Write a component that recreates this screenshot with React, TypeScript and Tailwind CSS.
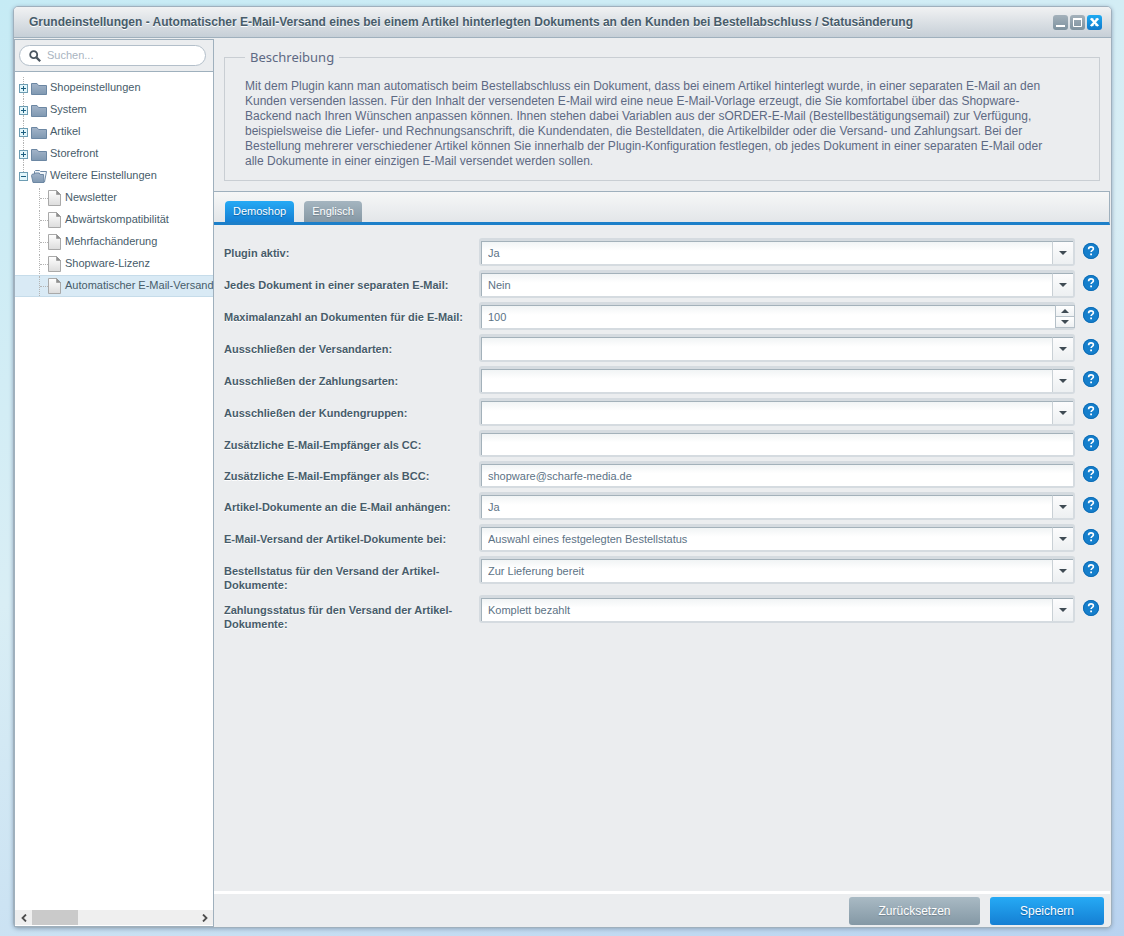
import { useState } from "react";
import type { ReactNode } from "react";

interface Field {
  id: string;
  label: string;
  value: string;
  type: "select" | "number" | "text";
}

const folders = ["Shopeinstellungen", "System", "Artikel", "Storefront"];

const pages = [
  "Newsletter",
  "Abwärtskompatibilität",
  "Mehrfachänderung",
  "Shopware-Lizenz",
  "Automatischer E-Mail-Versand",
];

const fields: Field[] = [
  { id: "active", label: "Plugin aktiv:", value: "Ja", type: "select" },
  { id: "separate", label: "Jedes Dokument in einer separaten E-Mail:", value: "Nein", type: "select" },
  { id: "max", label: "Maximalanzahl an Dokumenten für die E-Mail:", value: "100", type: "number" },
  { id: "dispatch", label: "Ausschließen der Versandarten:", value: "", type: "select" },
  { id: "payment", label: "Ausschließen der Zahlungsarten:", value: "", type: "select" },
  { id: "groups", label: "Ausschließen der Kundengruppen:", value: "", type: "select" },
  { id: "cc", label: "Zusätzliche E-Mail-Empfänger als CC:", value: "", type: "text" },
  { id: "bcc", label: "Zusätzliche E-Mail-Empfänger als BCC:", value: "shopware@scharfe-media.de", type: "text" },
  { id: "attach", label: "Artikel-Dokumente an die E-Mail anhängen:", value: "Ja", type: "select" },
  { id: "trigger", label: "E-Mail-Versand der Artikel-Dokumente bei:", value: "Auswahl eines festgelegten Bestellstatus", type: "select" },
  { id: "orderState", label: "Bestellstatus für den Versand der Artikel-Dokumente:", value: "Zur Lieferung bereit", type: "select" },
  { id: "paymentState", label: "Zahlungsstatus für den Versand der Artikel-Dokumente:", value: "Komplett bezahlt", type: "select" },
];

function ToggleIcon({ open }: { open: boolean }) {
  return (
    <span className="flex h-full w-[9px] shrink-0 flex-col items-center">
      <span className="w-px flex-1 border-l border-dotted border-[#b4b4b4]" />
      <svg width="9" height="9" viewBox="0 0 9 9" shapeRendering="crispEdges">
        <rect x="0.5" y="0.5" width="8" height="8" fill="#e3f6fb" stroke="#6d9db3" />
        <path d="M2 4.5h5" stroke="#1d5f80" />
        {!open && <path d="M4.5 2v5" stroke="#1d5f80" />}
      </svg>
      <span className={open ? "flex-1" : "w-px flex-1 border-l border-dotted border-[#b4b4b4]"} />
    </span>
  );
}

function FolderIcon({ open }: { open: boolean }) {
  return (
    <svg width="16" height="13" viewBox="0 0 16 13" className="shrink-0">
      <defs>
        <linearGradient id="folder" x1="0" y1="0" x2="0" y2="1">
          <stop offset="0" stopColor="#a3b4c9" />
          <stop offset="1" stopColor="#7f98b1" />
        </linearGradient>
      </defs>
      {open ? (
        <>
          <path d="M3.5 10V1.5l1-1h4l1 1h6l-2 10.500" fill="#f2f6fa" stroke="#6c87a3" />
          <path d="M.5 5.500l1-1.500h2l.8-1h4l.8 1.500h3.400l.5 8H2z" fill="url(#folder)" stroke="#6c87a3" />
        </>
      ) : (
        <path d="M.5 12.500V1.500h5.500l1.500 2h8v9z" fill="url(#folder)" stroke="#6c87a3" />
      )}
    </svg>
  );
}

function PageIcon() {
  return (
    <svg width="13" height="16" viewBox="0 0 13 16" className="shrink-0">
      <defs>
        <linearGradient id="page" x1="0" y1="0" x2="0" y2="1">
          <stop offset="0" stopColor="#fff" />
          <stop offset="1" stopColor="#dcdcdc" />
        </linearGradient>
      </defs>
      <path d="M.5.5H8.500l4 4v11H.5z" fill="url(#page)" stroke="#a9a9a9" />
      <path d="M8.500.5v4h4z" fill="#8f8f8f" stroke="#8f8f8f" strokeWidth=".6" />
    </svg>
  );
}

function Arrow({ up }: { up?: boolean }) {
  return (
    <svg width="8" height="4" viewBox="0 0 8 4">
      <path d={up ? "M0 4L4 0l4 4z" : "M0 0h8L4 4z"} fill="#3f4b54" />
    </svg>
  );
}

function HelpButton({ label }: { label: string }) {
  return (
    <button
      type="button"
      aria-label={`Hilfe: ${label}`}
      className="mt-[5px] flex size-4 shrink-0 items-center justify-center rounded-full bg-[#157fcc]"
    >
      <svg width="16" height="16" viewBox="0 0 16 16" fill="none">
        <circle cx="8" cy="8" r="7.500" stroke="#0f6cb4" />
        <path d="M5.600 6.200c0-1.600 1.100-2.300 2.400-2.300s2.400.8 2.400 2c0 1.500-2.300 1.500-2.300 3.200" stroke="#fff" strokeWidth="1.600" />
        <path d="M7.200 10.500h1.800v1.700H7.200z" fill="#fff" />
      </svg>
    </button>
  );
}

function WindowButton({ label, active, children }: { label: string; active?: boolean; children: ReactNode }) {
  return (
    <button
      type="button"
      aria-label={label}
      className={
        active
          ? "size-[15px] rounded-[3px] bg-linear-to-b from-[#1eaaf2] to-[#1079cb]"
          : "size-[15px] rounded-[3px] bg-linear-to-b from-[#a3b1bb] to-[#7e929f]"
      }
    >
      <svg width="15" height="15" viewBox="0 0 15 15" fill="none">
        {children}
      </svg>
    </button>
  );
}

function FieldRow({ field }: { field: Field }) {
  const [value, setValue] = useState(field.value);
  const control =
    "min-w-0 flex-1 appearance-none border-l border-t border-[#a3b1ba] bg-linear-to-b from-[#f1f4f5] to-white to-40% pl-[6px] text-[11px] leading-[14px] text-[#5c7285] outline-none";

  return (
    <div className="flex items-start gap-[8px]">
      <div className="flex min-w-0 flex-1 items-start">
        <label
          htmlFor={field.id}
          className="-mb-px w-[255px] shrink-0 pt-[8px] pr-[2px] text-[11px] leading-[14px] font-bold text-[#475c6a] [text-shadow:0_1px_0_#fff]"
        >
          {field.label}
        </label>
        <div
          className={`flex min-w-0 flex-1 rounded-[3px] border-2 border-t-[3px] border-[#d5dbe0] ${
            field.type === "text" ? "h-[27px]" : "h-[28px]"
          }`}
        >
          {field.type === "select" && (
            <>
              <select id={field.id} className={control} value={value} onChange={(e) => setValue(e.target.value)}>
                <option>{field.value}</option>
              </select>
              <span className="pointer-events-none -ml-[21px] flex w-[21px] items-center justify-center border-t border-l border-t-[#a3b1ba] border-l-[#c9d0d5] bg-linear-to-b from-[#fcfcfd] to-[#edf0f2]">
                <Arrow />
              </span>
            </>
          )}
          {field.type === "text" && (
            <input id={field.id} className={control} value={value} onChange={(e) => setValue(e.target.value)} />
          )}
          {field.type === "number" && (
            <>
              <input id={field.id} className={control} value={value} onChange={(e) => setValue(e.target.value)} />
              <div className="-mr-[2px] flex w-[20px] flex-col border border-[#b5c0c8] bg-[#b5c0c8]">
                <button
                  type="button"
                  aria-label="Erhöhen"
                  onClick={() => setValue(String(Number(value) + 1))}
                  className="flex flex-1 items-center justify-center bg-linear-to-b from-white to-[#eef1f3]"
                >
                  <Arrow up />
                </button>
                <button
                  type="button"
                  aria-label="Verringern"
                  onClick={() => setValue(String(Number(value) - 1))}
                  className="mt-px flex flex-1 items-center justify-center bg-linear-to-b from-white to-[#eef1f3]"
                >
                  <Arrow />
                </button>
              </div>
            </>
          )}
        </div>
      </div>
      <HelpButton label={field.label} />
    </div>
  );
}

function Sidebar() {
  return (
    <aside className="flex w-[200px] shrink-0 flex-col border border-[#9fb0bd] bg-white">
      <div className="border-b border-[#9fb0bd] bg-[#ebedef] px-[4px] py-[5px]">
        <div className="flex h-[21px] w-[187px] items-center gap-[6px] rounded-full border border-[#b3bfca] bg-white px-[9px]">
          <svg width="12" height="12" viewBox="0 0 12 12" fill="none" className="shrink-0">
            <circle cx="4.700" cy="4.700" r="3.500" stroke="#4b5660" strokeWidth="1.800" />
            <path d="M7.400 7.400l3.800 3.800" stroke="#4b5660" strokeWidth="2.200" />
          </svg>
          <input
            type="search"
            aria-label="Suchen"
            placeholder="Suchen..."
            className="w-full min-w-0 text-[11px] outline-none placeholder:text-[#a9b4bf]"
          />
        </div>
      </div>
      <nav className="flex-1 pt-[5px] text-[11px] text-[#475c6a]">
        <ul>
          {folders.map((name) => (
            <li key={name}>
              <a href="#" className="flex h-[22px] items-center gap-[3px] pl-[4px]">
                <ToggleIcon open={false} />
                <FolderIcon open={false} />
                <span className="pb-[2px]">{name}</span>
              </a>
            </li>
          ))}
          <li>
            <a href="#" className="flex h-[22px] items-center gap-[3px] pl-[4px]">
              <ToggleIcon open />
              <FolderIcon open />
              <span className="pb-[2px]">Weitere Einstellungen</span>
            </a>
            <ul>
              {pages.map((name, i) => (
                <li
                  key={name}
                  className={
                    i === pages.length - 1
                      ? "h-[22px] border-y border-[#c6dcea] bg-[#d9eaf5] pl-[24px]"
                      : "h-[22px] border-y border-transparent pl-[24px]"
                  }
                >
                  <a href="#" className="flex h-full items-center border-l border-dotted border-[#b4b4b4]">
                    <span className="w-[8px] shrink-0 border-t border-dotted border-[#b4b4b4]" />
                    <PageIcon />
                    <span className="pb-[2px] pl-[4px] whitespace-nowrap">{name}</span>
                  </a>
                </li>
              ))}
            </ul>
          </li>
        </ul>
      </nav>
      <div className="mb-px flex h-[15px] bg-[#efefef]">
        <button type="button" aria-label="Nach links" className="flex w-[17px] items-center justify-center">
          <svg width="6" height="8" viewBox="0 0 6 8" fill="none">
            <path d="M5 .5L1.500 4 5 7.500" stroke="#4d4d4d" strokeWidth="1.800" />
          </svg>
        </button>
        <div className="w-[46px] bg-[#cacaca]" />
        <button type="button" aria-label="Nach rechts" className="ml-auto flex w-[17px] items-center justify-center">
          <svg width="6" height="8" viewBox="0 0 6 8" fill="none">
            <path d="M1 .5L4.500 4 1 7.500" stroke="#4d4d4d" strokeWidth="1.800" />
          </svg>
        </button>
      </div>
    </aside>
  );
}

export default function App() {
  const [tab, setTab] = useState("Demoshop");

  return (
    <div className="flex min-h-screen bg-[linear-gradient(160deg,#c6ebf5,#d9eef5_45%,#b9d3f0)] pt-[6px] pr-[12px] pb-[8px] pl-[13px] font-['Liberation_Sans',Arial,sans-serif]">
      <div className="flex min-w-0 flex-1 flex-col rounded-[5px] border border-[#9fb0bd] bg-[#ebedef] shadow-[0_1px_4px_#8fa5ba]">
        <header className="flex h-[31px] items-center justify-between rounded-t-[4px] border-b border-[#9fb0bd] bg-linear-to-b from-[#f1f2f3] to-[#c6cfd7] pr-[9px] pl-[15px]">
          <h1 className="text-[12px] font-bold whitespace-nowrap text-[#475c6a] [text-shadow:0_1px_0_#fff]">
            Grundeinstellungen - Automatischer E-Mail-Versand eines bei einem Artikel hinterlegten Dokuments an den
            Kunden bei Bestellabschluss / Statusänderung
          </h1>
          <div className="flex gap-[2px]">
            <WindowButton label="Minimieren">
              <path d="M3 11h9" stroke="#fff" strokeWidth="2" />
            </WindowButton>
            <WindowButton label="Maximieren">
              <path d="M3.500 4.500h8v7h-8z" stroke="#fff" />
              <path d="M3 4h9" stroke="#fff" strokeWidth="2" />
            </WindowButton>
            <WindowButton label="Schließen" active>
              <path d="M4 3.500l7 7.500M11 3.500l-7 7.500" stroke="#fff" strokeWidth="2.400" />
              <path d="M3.500 4h3M8.500 4h3M3.500 10.500h3M8.500 10.500h3" stroke="#fff" />
            </WindowButton>
          </div>
        </header>

        <div className="flex flex-1 pt-px pr-px">
          <Sidebar />

          <main className="flex min-w-0 flex-1 flex-col">
            <fieldset className="mx-[10px] mt-[11px] mb-[10px] border border-[#c9ced3] px-[20px] pb-[11px]">
              <legend className="px-[5px] font-['Noto_Sans',sans-serif] text-[13px] leading-[15px] text-[#5d6983]">
                Beschreibung
              </legend>
              <p className="pt-[14px] pr-[20px] text-[12px] leading-[15px] text-[#5d6983]">
                Mit dem Plugin kann man automatisch beim Bestellabschluss ein Dokument, dass bei einem Artikel
                hinterlegt wurde, in einer separaten E-Mail an den Kunden versenden lassen. Für den Inhalt der
                versendeten E-Mail wird eine neue E-Mail-Vorlage erzeugt, die Sie komfortabel über das
                Shopware-Backend nach Ihren Wünschen anpassen können. Ihnen stehen dabei Variablen aus der
                sORDER-E-Mail (Bestellbestätigungsemail) zur Verfügung, beispielsweise die Liefer- und
                Rechnungsanschrift, die Kundendaten, die Bestelldaten, die Artikelbilder oder die Versand- und
                Zahlungsart. Bei der Bestellung mehrerer verschiedener Artikel können Sie innerhalb der
                Plugin-Konfiguration festlegen, ob jedes Dokument in einer separaten E-Mail oder alle Dokumente in
                einer einzigen E-Mail versendet werden sollen.
              </p>
            </fieldset>

            <div
              role="tablist"
              className="flex h-[34px] items-end gap-[10px] border-t border-r border-b-[3px] border-t-[#9fb0bd] border-r-[#9fb0bd] border-b-[#1c7fc9] bg-linear-to-b from-[#f6f7f7] to-[#e3e6e9] px-[11px]"
            >
              {["Demoshop", "Englisch"].map((name) => (
                <button
                  key={name}
                  type="button"
                  role="tab"
                  aria-selected={tab === name}
                  onClick={() => setTab(name)}
                  className={
                    tab === name
                      ? "h-[21px] rounded-t-[4px] bg-linear-to-b from-[#26aaf5] to-[#157fd3] px-[8px] text-[11px] text-white [text-shadow:0_1px_1px_#0b5fa5]"
                      : "h-[21px] rounded-t-[4px] bg-linear-to-b from-[#a5b5c0] to-[#8698a4] px-[8px] text-[11px] text-white [text-shadow:0_1px_1px_#6e7f8b]"
                  }
                >
                  {name}
                </button>
              ))}
            </div>

            <form className="flex flex-1 flex-col gap-[4px] pt-[13px] pr-[11px] pb-[20px] pl-[10px]">
              {fields.map((field) => (
                <FieldRow key={field.id} field={field} />
              ))}
            </form>

            <footer className="flex h-[36px] items-center justify-end gap-[10px] border-t-[3px] border-white pr-[6px]">
              <button
                type="button"
                className="h-[28px] w-[131px] rounded-[3px] bg-linear-to-b from-[#a9bac4] to-[#8498a5] text-[12px] text-white [text-shadow:0_1px_1px_#6e7f8b]"
              >
                Zurücksetzen
              </button>
              <button
                type="button"
                className="h-[28px] w-[114px] rounded-[3px] bg-linear-to-b from-[#26aaf5] to-[#157fd3] text-[12px] text-white [text-shadow:0_1px_1px_#0b5fa5]"
              >
                Speichern
              </button>
            </footer>
          </main>
        </div>
      </div>
    </div>
  );
}
